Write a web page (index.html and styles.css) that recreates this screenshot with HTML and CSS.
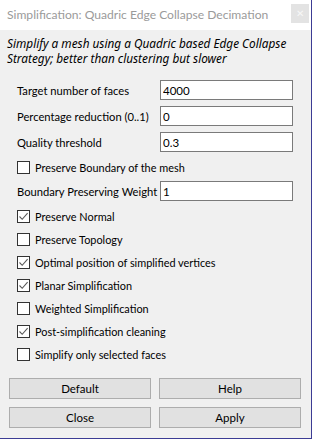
FILE: index.html
```html
<!DOCTYPE html>
<html lang="en">
<head>
    <meta charset="UTF-8">
    <meta name="viewport" content="width=device-width, initial-scale=1.0">
    <title>Simplification: Quadric Edge Collapse Decimation</title>
    <link rel="stylesheet" href="styles.css">
</head>
<body>
    <div class="window">
        <div class="titlebar">
            <span class="title">Simplification: Quadric Edge Collapse Decimation</span>
            <span class="close-btn">&#x2715;</span>
        </div>

        <p class="description">Simplify a mesh using a Quadric based Edge Collapse Strategy; better than clustering but slower</p>

        <div class="form">
            <div class="field">
                <label>Target number of faces</label>
                <input type="text" value="4000">
            </div>
            <div class="field">
                <label>Percentage reduction (0..1)</label>
                <input type="text" value="0">
            </div>
            <div class="field">
                <label>Quality threshold</label>
                <input type="text" value="0.3">
            </div>
            <div class="check">
                <span class="box"></span>
                <span>Preserve Boundary of the mesh</span>
            </div>
            <div class="field">
                <label>Boundary Preserving Weight</label>
                <input type="text" value="1">
            </div>
            <div class="check">
                <span class="box checked"><svg viewBox="0 0 11 11"><path d="M1.5 5.5 L4.2 8.3 L9.6 2.2"/></svg></span>
                <span>Preserve Normal</span>
            </div>
            <div class="check">
                <span class="box"></span>
                <span>Preserve Topology</span>
            </div>
            <div class="check">
                <span class="box checked"><svg viewBox="0 0 11 11"><path d="M1.5 5.5 L4.2 8.3 L9.6 2.2"/></svg></span>
                <span>Optimal position of simplified vertices</span>
            </div>
            <div class="check">
                <span class="box checked"><svg viewBox="0 0 11 11"><path d="M1.5 5.5 L4.2 8.3 L9.6 2.2"/></svg></span>
                <span>Planar Simplification</span>
            </div>
            <div class="check">
                <span class="box"></span>
                <span>Weighted Simplification</span>
            </div>
            <div class="check">
                <span class="box checked"><svg viewBox="0 0 11 11"><path d="M1.5 5.5 L4.2 8.3 L9.6 2.2"/></svg></span>
                <span>Post-simplification cleaning</span>
            </div>
            <div class="check">
                <span class="box"></span>
                <span>Simplify only selected faces</span>
            </div>
        </div>

        <div class="buttons">
            <button>Default</button>
            <button>Help</button>
            <button>Close</button>
            <button>Apply</button>
        </div>
    </div>
</body>
</html>
```

FILE: styles.css
```css
body {
    margin: 0;
    font-family: Lato, 'Noto Sans', sans-serif;
    font-size: 11.2px;
    color: #000;
    background: #f0f0f0;
}

.window {
    width: 312px;
    height: 439px;
    box-sizing: border-box;
    background-color: #f0f0f0;
    border-right: 1px solid #3c3c94;
    border-bottom: 1px solid #3c3c94;
    overflow: hidden;
}

.titlebar {
    height: 30px;
    background: #fff;
    display: flex;
    align-items: center;
    justify-content: space-between;
    padding: 0 2px 0 7px;
}

.title {
    color: #9a9a9a;
    font-size: 12.1px;
    white-space: nowrap;
    padding-bottom: 2px;
}

.close-btn {
    flex: none;
    width: 18px;
    height: 19px;
    background: #e3e3e3;
    color: #f7f7f7;
    font-size: 10px;
    display: flex;
    align-items: center;
    justify-content: center;
    margin-bottom: 4px;
}

.description {
    margin: 0;
    padding: 6px 7px 0;
    height: 44px;
    font-family: 'Noto Sans', sans-serif;
    font-size: 11.8px;
    font-style: italic;
    line-height: 15px;
}

.form {
    display: flex;
    flex-direction: column;
    padding-left: 17px;
}

.field {
    display: flex;
    align-items: center;
    height: 20px;
    margin-bottom: 6px;
}

.field label {
    width: 143px;
    white-space: nowrap;
}

.field input {
    width: 133px;
    height: 20px;
    box-sizing: border-box;
    border: 1px solid #7a7a7a;
    background: #fff;
    padding: 0 2px;
    font-family: inherit;
    font-size: 11.5px;
    color: #000;
    outline: none;
}

.check {
    display: flex;
    align-items: center;
    gap: 5px;
    height: 13px;
    margin-top: 3px;
    margin-bottom: 7px;
    font-size: 10.9px;
    white-space: nowrap;
}

.box {
    width: 13px;
    height: 13px;
    box-sizing: border-box;
    border: 1px solid #333;
    background: #fff;
    display: flex;
    align-items: center;
    justify-content: center;
}

.box svg {
    width: 11px;
    height: 11px;
    fill: none;
    stroke: #5a5a5a;
    stroke-width: 1.1;
}

.buttons {
    display: grid;
    grid-template-columns: 142px 142px;
    gap: 8px 8px;
    padding: 0 0 0 9px;
    margin-top: 10px;
}

.buttons button {
    height: 21px;
    background: #e1e1e1;
    border: 1px solid #adadad;
    font-family: inherit;
    font-size: 11.5px;
    color: #000;
    padding: 0;
}
```
